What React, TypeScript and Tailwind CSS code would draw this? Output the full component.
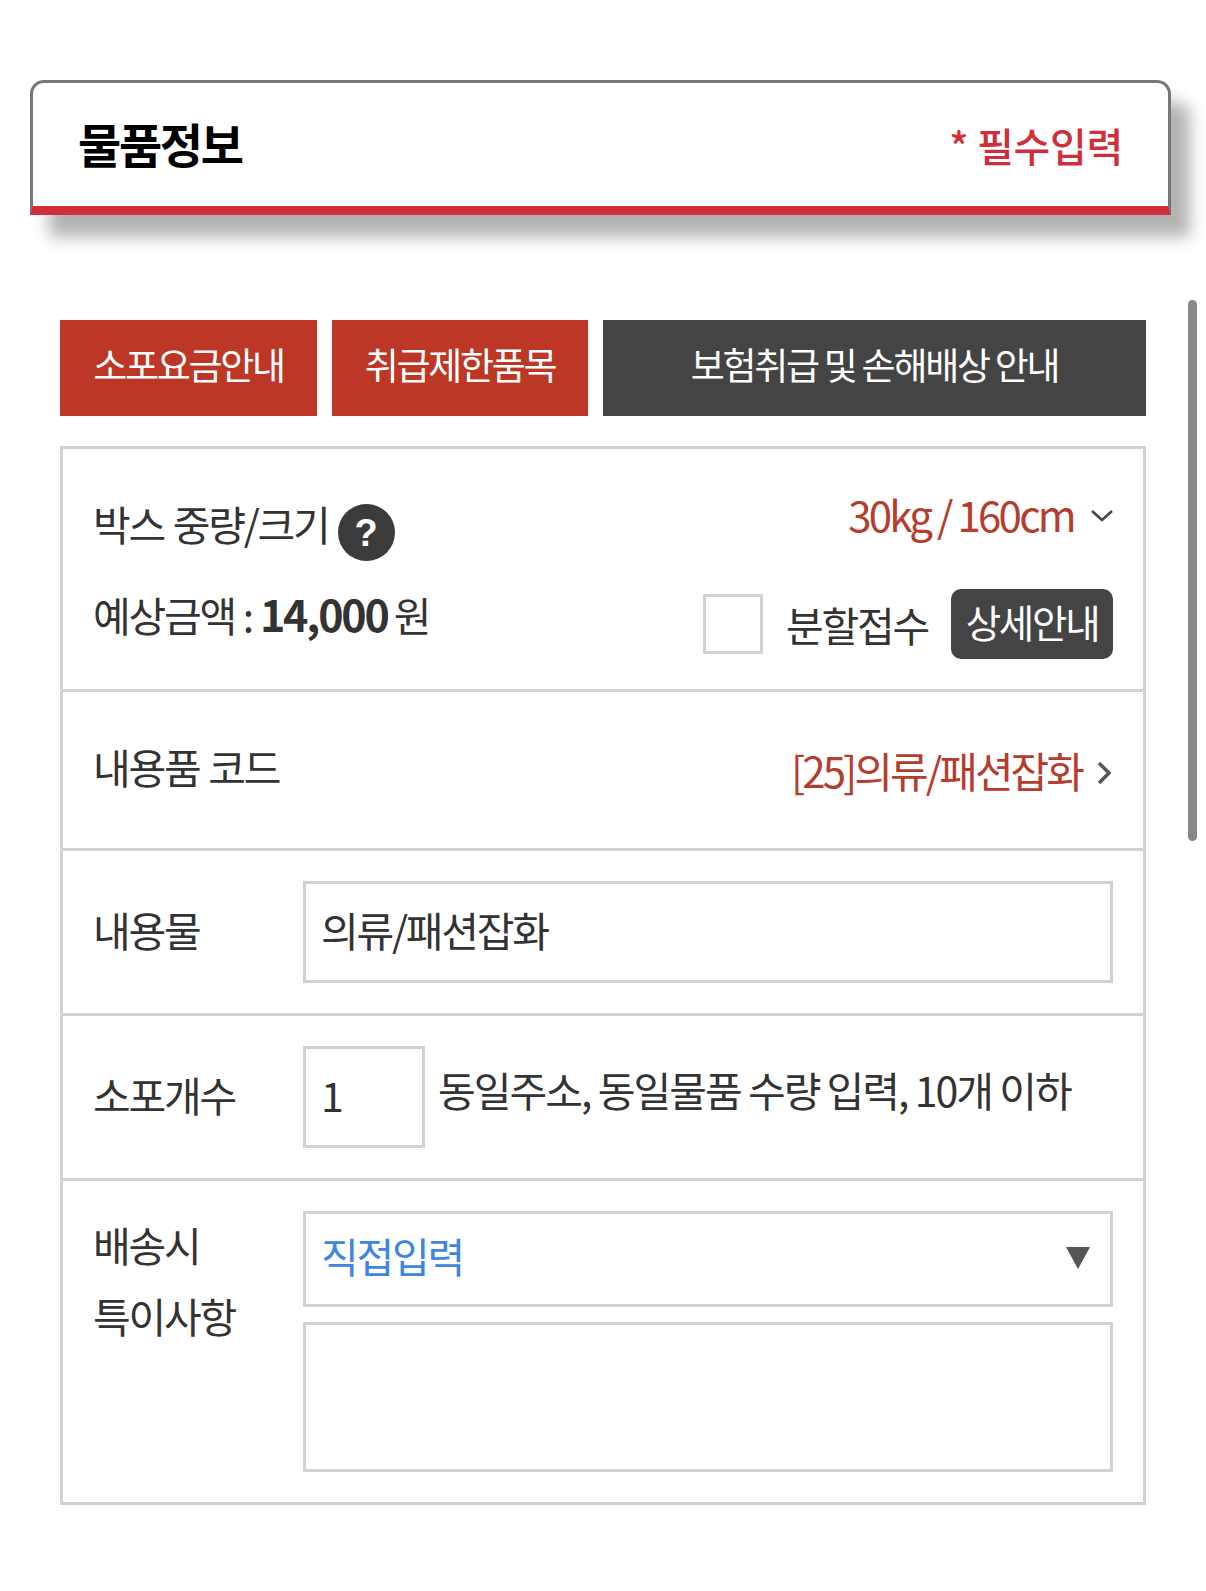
import React from 'react';

const font = { fontFamily: '"Noto Sans CJK KR", "Noto Sans", sans-serif' };

export default function App() {
    return (
        <div style={font} className="relative w-[1206px] h-[1591px] bg-white overflow-hidden text-[#333] text-[41px] leading-none tracking-[-0.055em]">
            {/* 물품정보 헤더 */}
            <div className="ml-[30px] mt-[80px] w-[1141px] h-[135px] flex items-center justify-between pl-[45px] pr-[45px] pb-[4px] bg-white border-[3px] border-b-[9px] border-[#777] border-b-[#d12f38] rounded-t-[14px] shadow-[19px_22px_16px_rgba(0,0,0,0.3)]">
                <span className="text-[47px] font-bold text-black tracking-[-0.05em]">물품정보</span>
                <span className="pt-[4px] text-[40px] font-medium text-[#cf2f3d] tracking-[-0.008em]">* 필수입력</span>
            </div>

            {/* 안내 버튼 */}
            <div className="ml-[60px] mt-[105px] w-[1086px] flex gap-[15px] h-[96px] text-white text-[37px]">
                <div className="w-[257px] bg-[#bc3726] flex items-center justify-center pb-[7px]">소포요금안내</div>
                <div className="w-[256px] bg-[#bc3726] flex items-center justify-center pb-[7px]">취급제한품목</div>
                <div className="flex-1 bg-[#444444] flex items-center justify-center pb-[7px]">보험취급 및 손해배상 안내</div>
            </div>

            {/* 입력 테이블 */}
            <div className="ml-[60px] mt-[30px] w-[1086px] h-[1059px] border-[3px] border-[#d2d2d2] flex flex-col">
                <div className="h-[243px] pl-[30px] pr-[30px] pt-[55px] border-b-[3px] border-[#d2d2d2] flex flex-col">
                    <div className="flex justify-between h-[85px]">
                        <div className="flex items-start">
                            <span className="-mt-px [word-spacing:2px]">박스 중량/크기</span>
                            <span className="ml-[9px] w-[57px] h-[57px] rounded-full bg-[#3b3b3b] text-white text-[38px] font-bold font-['Liberation_Sans'] flex items-center justify-center tracking-normal">?</span>
                        </div>
                        <div className="flex items-start text-[#b53d2d]">
                            <span className="text-[42px] -mt-[11px] tracking-[-0.065em]">30kg / 160cm</span>
                            <svg className="ml-[16px] mt-[5px] -mr-px" width="24" height="14" viewBox="0 0 24 14" fill="none" stroke="#444" strokeWidth="2.5">
                                <path d="M2 2 L12 11 L22 2" />
                            </svg>
                        </div>
                    </div>
                    <div className="flex justify-between">
                        <div className="mt-[3px] whitespace-pre [word-spacing:1px]">
                            예상금액 : <b className="text-[43px] tracking-[-0.05em] -mr-[2px]">14,000</b> 원
                        </div>
                        <div className="flex items-center">
                            <span className="w-[60px] h-[60px] border-[3px] border-[#d2d2d2]" />
                            <span className="ml-[23px] w-[142px] whitespace-nowrap">분할접수</span>
                            <span className="ml-[23px] w-[162px] h-[70px] rounded-[10px] bg-[#444] text-white text-[38.5px] flex items-center justify-center pb-[6px]">상세안내</span>
                        </div>
                    </div>
                </div>

                <div className="h-[159px] pl-[30px] pr-[30px] border-b-[3px] border-[#d2d2d2] flex items-center justify-between">
                    <span className="pb-[7px] [word-spacing:2px]">내용품 코드</span>
                    <span className="flex items-center text-[#b53d2d] text-[42px] tracking-[-0.07em]">
                        [25]의류/패션잡화
                        <svg className="ml-[14px] mt-[5px]" width="17" height="26" viewBox="0 0 17 26" fill="none" stroke="#55565a" strokeWidth="3.5">
                            <path d="M3 3 L13 13 L3 23" />
                        </svg>
                    </span>
                </div>

                <div className="h-[165px] pl-[30px] pr-[30px] border-b-[3px] border-[#d2d2d2] flex items-center">
                    <span className="w-[210px] pb-[5px]">내용물</span>
                    <div className="flex-1 h-[102px] border-[3px] border-[#d2d2d2] flex items-center px-[15px] pb-[6px]">의류/패션잡화</div>
                </div>

                <div className="h-[165px] pl-[30px] pr-[30px] border-b-[3px] border-[#d2d2d2] flex items-center">
                    <span className="w-[210px] pb-[5px]">소포개수</span>
                    <div className="w-[122px] h-[102px] border-[3px] border-[#d2d2d2] flex items-center px-[15px] pb-[6px]">1</div>
                    <span className="ml-[13px] pb-[15px] whitespace-nowrap tracking-[-0.048em]">동일주소, 동일물품 수량 입력, 10개 이하</span>
                </div>

                <div className="flex-1 pl-[30px] pr-[30px] pt-[30px] flex">
                    <div className="w-[210px] leading-[71px] -mt-[2px]">배송시<br />특이사항</div>
                    <div className="flex-1 flex flex-col gap-[15px]">
                        <div className="h-[96px] border-[3px] border-[#d2d2d2] flex items-center justify-between pl-[15px] pr-[20px] pb-[7px] text-[#3d85e0]">
                            직접입력
                            <span className="w-0 h-0 mt-[5px] border-l-[12px] border-r-[12px] border-t-[22px] border-l-transparent border-r-transparent border-t-[#555]" />
                        </div>
                        <div className="h-[150px] border-[3px] border-[#d2d2d2]" />
                    </div>
                </div>
            </div>

            {/* 스크롤바 */}
            <div className="absolute left-[1188px] top-[300px] w-[9px] h-[541px] rounded-full bg-[#888]" />
        </div>
    );
}
